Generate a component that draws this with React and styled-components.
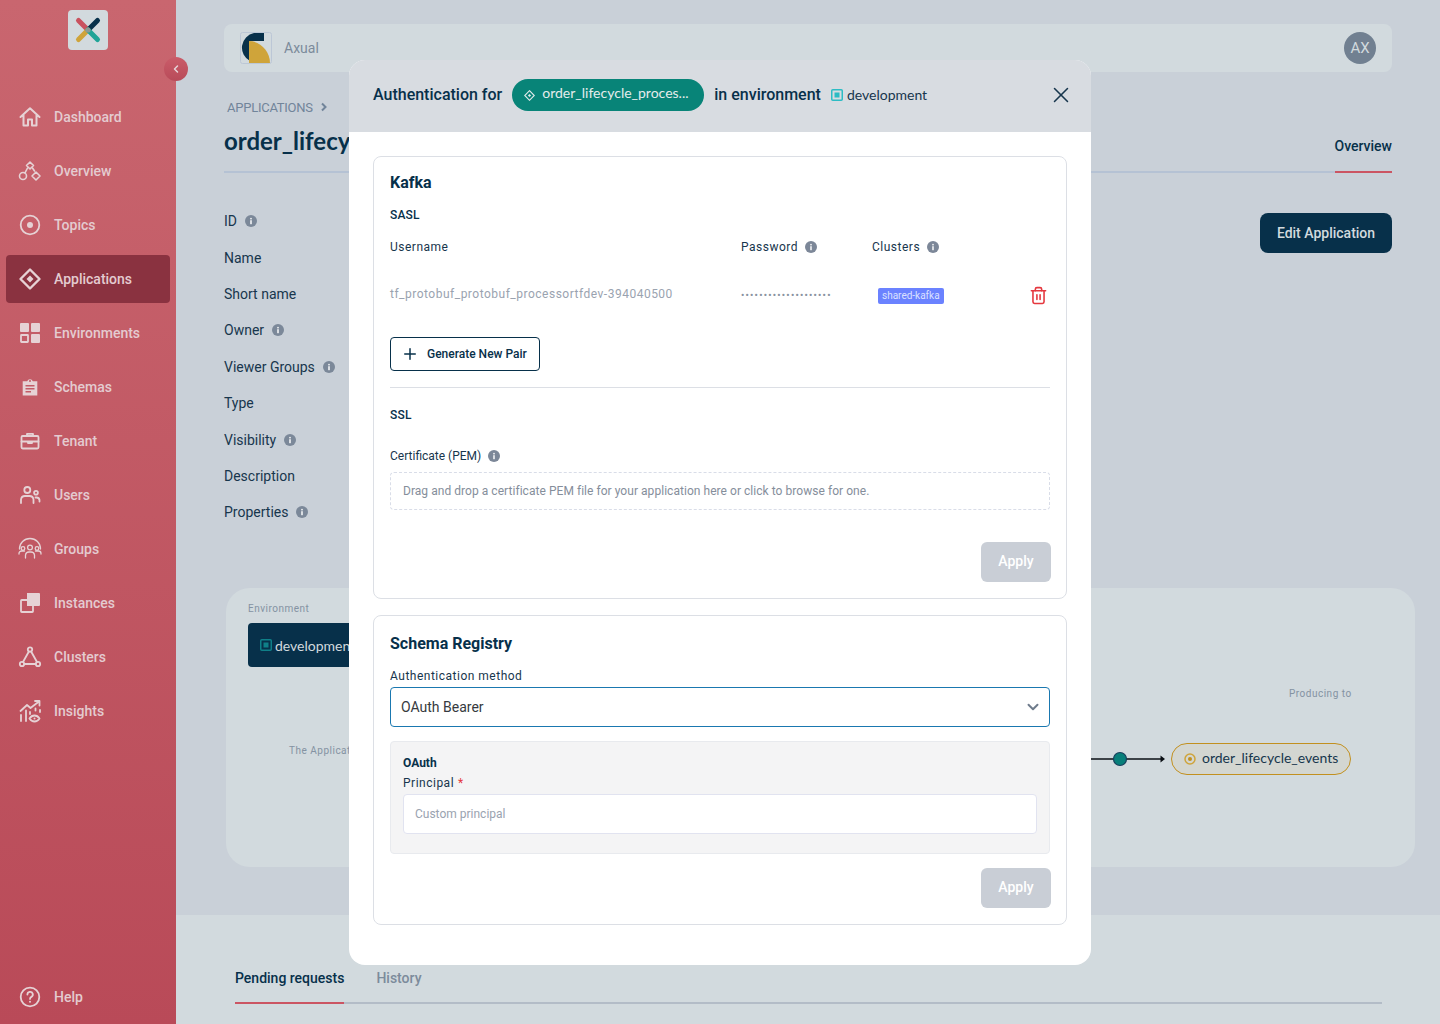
import React from 'react';
import styled, { createGlobalStyle } from 'styled-components';
import { ChevronDown, ChevronLeft, Plus, X, Trash2 } from 'lucide-react';

const GlobalStyle = createGlobalStyle`
  html, body {
    margin: 0;
    padding: 0;
    height: 100%;
    overflow: hidden;
    font-family: Roboto, "Liberation Sans", Arial, sans-serif;
  }
  * { box-sizing: border-box; }
`;

const Page = styled.div`
  display: flex;
  width: 1440px;
  height: 1024px;
  overflow: hidden;
  background-color: #c9d0d8;
`;

const Sidebar = styled.aside`
  position: relative;
  flex: 0 0 176px;
  display: flex;
  flex-direction: column;
  padding: 10px 6px 3px;
  background: linear-gradient(180deg, #c9666f 0%, #b94a58 100%);
`;

const LogoBox = styled.div`
  width: 40px;
  height: 40px;
  margin: 0 0 43px 62px;
  display: flex;
  align-items: center;
  justify-content: center;
  border-radius: 4px;
  background-color: #d2dade;
`;

const CollapseButton = styled.button`
  position: absolute;
  top: 57px;
  left: 164px;
  width: 24px;
  height: 24px;
  padding: 0;
  border: none;
  border-radius: 50%;
  display: flex;
  align-items: center;
  justify-content: center;
  color: #e6d5d8;
  background: linear-gradient(180deg, #ca5c69 0%, #b84b59 100%);
`;

const NavList = styled.nav`
  display: flex;
  flex-direction: column;
  gap: 6px;
`;

const NavItem = styled.a`
  height: 48px;
  display: flex;
  align-items: center;
  gap: 12px;
  padding-left: 12px;
  border-radius: 4px;
  color: #e4cbd0;
  font-size: 14px;
  font-weight: 500;
  background-color: ${(p) => (p.$active ? '#8a3240' : 'transparent')};
`;

const HelpItem = styled(NavItem)`
  margin-top: auto;
`;

const NavIcon = styled.svg`
  flex: 0 0 24px;
  width: 24px;
  height: 24px;
  fill: none;
  stroke: #e6d2d5;
  stroke-width: ${(p) => p.$stroke || 1.8};
  stroke-linecap: round;
  stroke-linejoin: round;
`;

const Main = styled.main`
  flex: 1;
  min-width: 0;
  display: flex;
  flex-direction: column;
`;

const Upper = styled.section`
  height: 915px;
  padding: 24px 48px 0;
`;

const TopBar = styled.header`
  height: 48px;
  display: flex;
  align-items: center;
  justify-content: space-between;
  padding: 0 16px;
  border-radius: 8px;
  background-color: #d2dade;
`;

const Org = styled.div`
  display: flex;
  align-items: center;
  gap: 12px;
  color: #7c8b9b;
  font-size: 14px;
`;

const Avatar = styled.div`
  width: 32px;
  height: 32px;
  border-radius: 50%;
  display: flex;
  align-items: center;
  justify-content: center;
  color: #d2dade;
  font-size: 15px;
  font-weight: 400;
  background-color: #718091;
`;

const Breadcrumb = styled.div`
  display: flex;
  align-items: center;
  gap: 5px;
  height: 16px;
  margin: 27px 0 0 3px;
  color: #71849a;
  font-size: 13px;
  letter-spacing: -0.25px;
`;

const TitleRow = styled.div`
  display: flex;
  justify-content: space-between;
  align-items: flex-end;
  height: 58px;
  border-bottom: 2px solid #b5c2d4;
`;

const Title = styled.h1`
  margin: 0 0 14px;
  color: #07304a;
  font-family: Lato, Roboto, sans-serif;
  font-size: 24px;
  line-height: 32px;
  font-weight: 700;
  white-space: nowrap;
`;

const ActiveTab = styled.div`
  margin-bottom: -2px;
  padding-bottom: 17px;
  border-bottom: 2px solid #cb5563;
  color: #07304a;
  font-size: 14px;
  line-height: 16px;
  font-weight: 500;
`;

const DetailsWrap = styled.div`
  display: flex;
  justify-content: space-between;
  align-items: flex-start;
  margin-top: 30px;
`;

const DetailsList = styled.div`
  display: flex;
  flex-direction: column;
`;

const DetailRow = styled.div`
  height: 36.4px;
  display: flex;
  align-items: center;
  gap: 8px;
  color: #17364d;
  font-size: 14px;
`;

const EditButton = styled.button`
  width: 132px;
  height: 40px;
  margin-top: 10px;
  border: none;
  border-radius: 8px;
  color: #d2dade;
  font-family: inherit;
  font-size: 14px;
  font-weight: 500;
  background-color: #07304a;
`;

const Diagram = styled.section`
  position: relative;
  height: 279px;
  margin: 57px -23px 0 2px;
  border-radius: 24px;
  background-color: #d2dade;
`;

const DiagramLabel = styled.span`
  position: absolute;
  top: ${(p) => p.$top}px;
  left: ${(p) => p.$left}px;
  color: #8492a2;
  font-size: 10px;
  line-height: 12px;
  letter-spacing: 0.5px;
  white-space: nowrap;
`;

const EnvNode = styled.div`
  position: absolute;
  top: 35px;
  left: 22px;
  width: 200px;
  height: 44px;
  display: flex;
  align-items: center;
  gap: 3px;
  padding: 1px 0 0 12px;
  border-radius: 4px;
  color: #d2dade;
  font-family: Lato, Roboto, sans-serif;
  font-size: 14px;
  background-color: #07304a;
`;

const Connector = styled.svg`
  position: absolute;
  top: 161px;
  left: 860px;
  width: 82px;
  height: 20px;
`;

const TopicNode = styled.div`
  position: absolute;
  top: 155px;
  left: 945px;
  width: 180px;
  height: 32px;
  display: flex;
  align-items: center;
  gap: 6px;
  padding-left: 12px;
  border: 1px solid #c2901f;
  border-radius: 16px;
  color: #17364d;
  font-family: Lato, Roboto, sans-serif;
  font-size: 14px;
  background-color: #d3d6d1;
`;

const TopicText = styled.span`
  margin-top: -3px;
`;

const LowerBand = styled.section`
  flex: 1;
  padding: 53px 58px 0 59px;
  background-color: #d2dade;
`;

const LowerTabs = styled.div`
  display: flex;
  gap: 32px;
  border-bottom: 2px solid #b3bcc7;
`;

const LowerTab = styled.div`
  margin-bottom: -2px;
  padding-bottom: 15px;
  height: 36px;
  font-size: 14px;
  line-height: 20px;
  font-weight: 500;
  color: ${(p) => (p.$active ? '#07304a' : '#7c8b9b')};
  border-bottom: 2px solid ${(p) => (p.$active ? '#cb5563' : 'transparent')};
`;

const Modal = styled.div`
  position: fixed;
  top: 60px;
  left: 349px;
  width: 742px;
  height: 905px;
  border-radius: 16px;
  overflow: hidden;
  background-color: #ffffff;
`;

const ModalHeader = styled.div`
  height: 72px;
  display: flex;
  align-items: center;
  padding: 0 16px 2px 24px;
  color: #07304a;
  font-size: 16px;
  font-weight: 500;
  background-color: #d8dce1;
`;

const HeaderText = styled.span`
  margin-top: -1px;
`;

const AppPill = styled.div`
  width: 192px;
  height: 32px;
  display: flex;
  align-items: center;
  gap: 7px;
  margin: 0 10px;
  padding: 0 0 0 12px;
  border-radius: 16px;
  color: #e4ecec;
  font-family: Lato, Roboto, sans-serif;
  font-size: 14px;
  font-weight: 400;
  background-color: #088478;
`;

const PillText = styled.span`
  margin-top: -5px;
`;

const EnvTag = styled.div`
  display: flex;
  align-items: center;
  gap: 4px;
  margin-left: 10px;
  color: #17364d;
  font-family: Lato, Roboto, sans-serif;
  font-size: 14px;
  font-weight: 400;
`;

const CloseButton = styled.button`
  margin-left: auto;
  flex: 0 0 28px;
  width: 28px;
  height: 28px;
  padding: 0;
  border: none;
  display: flex;
  align-items: center;
  justify-content: center;
  color: #17364d;
  background: none;
`;

const ModalBody = styled.div`
  display: flex;
  flex-direction: column;
  gap: 16px;
  padding: 24px;
`;

const Card = styled.div`
  display: flex;
  flex-direction: column;
  padding: ${(p) => p.$top}px 16px 16px;
  border: 1px solid #dcdfe5;
  border-radius: 8px;
`;

const CardTitle = styled.h2`
  margin: 0;
  color: #07304a;
  font-size: 16px;
  line-height: 20px;
  font-weight: 700;
`;

const SubTitle = styled.h3`
  height: 16px;
  margin: ${(p) => p.$mt}px 0 0;
  color: #07304a;
  font-size: 12px;
  line-height: 16px;
  font-weight: 500;
  letter-spacing: 0.2px;
`;

const CredGrid = styled.div`
  display: grid;
  grid-template-columns: 351px 131px 1fr 21px;
  align-items: center;
`;

const HeadCell = styled.div`
  display: flex;
  align-items: center;
  gap: 7px;
  height: 16px;
  margin-top: 16px;
  color: #17364d;
  font-size: 12px;
  letter-spacing: 0.5px;
`;

const ValueCell = styled.div`
  height: 48px;
  margin-top: 16px;
  display: flex;
  align-items: center;
  padding-bottom: 2px;
  color: #9aa3b0;
  font-size: 12px;
  letter-spacing: 0.5px;
`;

const Dots = styled(ValueCell)`
  padding-bottom: 0;
  color: #8a93a1;
  font-size: 9px;
  letter-spacing: 1.3px;
  font-weight: 700;
`;

const ClusterCell = styled(ValueCell)`
  padding: 1px 0 0;
`;

const ClusterChip = styled.span`
  height: 16px;
  margin-left: 6px;
  padding: 0 4px;
  border-radius: 2px;
  color: #dbe1ff;
  font-size: 10px;
  line-height: 16px;
  letter-spacing: 0;
  background-color: #6b82ff;
`;

const TrashCell = styled(ValueCell)`
  padding: 1px 0 0;
  color: #e5383f;

  svg {
    flex: none;
  }
`;

const OutlineButton = styled.button`
  width: 150px;
  height: 34px;
  margin-top: 18px;
  display: flex;
  align-items: center;
  gap: 8px;
  padding: 0 0 0 10px;
  border: 1px solid #07304a;
  border-radius: 4px;
  color: #07304a;
  font-family: inherit;
  font-size: 12px;
  font-weight: 500;
  background-color: #ffffff;
`;

const Divider = styled.hr`
  width: 100%;
  height: 1px;
  margin: 16px 0 0;
  border: none;
  background-color: #dcdfe5;
`;

const FieldLabel = styled.div`
  display: flex;
  align-items: center;
  gap: 7px;
  height: 16px;
  margin-top: ${(p) => p.$mt}px;
  color: #17364d;
  font-size: 12px;
  letter-spacing: ${(p) => p.$ls || 0}px;
`;

const DropZone = styled.div`
  height: 38px;
  margin-top: 8px;
  display: flex;
  align-items: center;
  padding-left: 12px;
  border: 1px dashed #d9dde8;
  border-radius: 4px;
  color: #858e9b;
  font-size: 12px;
  letter-spacing: 0.045px;
`;

const ApplyButton = styled.button`
  align-self: flex-end;
  width: 70px;
  height: 40px;
  margin: ${(p) => p.$mt}px -1px 0 0;
  padding: 0 0 2px;
  border: none;
  border-radius: 6px;
  color: #ffffff;
  font-family: inherit;
  font-size: 14px;
  font-weight: 500;
  background-color: #c9ced6;
`;

const SelectBox = styled.div`
  height: 40px;
  margin-top: 3px;
  display: flex;
  align-items: center;
  justify-content: space-between;
  padding: 0 7px 0 10px;
  border: 1px solid #1a78b0;
  border-radius: 4px;
  color: #363a40;
  font-size: 14px;
`;

const OAuthBox = styled.div`
  display: flex;
  flex-direction: column;
  margin-top: 14px;
  padding: 13px 12px 19px;
  border: 1px solid #e8eaee;
  border-radius: 4px;
  background-color: #f4f4f5;
`;

const OAuthTitle = styled.div`
  height: 16px;
  color: #07304a;
  font-size: 12px;
  line-height: 16px;
  font-weight: 700;
`;

const Required = styled.span`
  margin-left: -3px;
  color: #e5383f;
`;

const TextInput = styled.input`
  height: 40px;
  margin-top: 3px;
  padding: 0 11px;
  border: 1px solid #e1e3f0;
  border-radius: 4px;
  font-family: inherit;
  font-size: 12px;
  background-color: #ffffff;

  &::placeholder {
    color: #9aa3b0;
    opacity: 1;
  }
`;

const InfoMark = ({ color = '#7c8798' }) => (
  <svg width="12" height="12" viewBox="0 0 12 12">
    <circle cx="6" cy="6" r="6" fill={color} />
    <rect x="5.1" y="5.2" width="1.8" height="4" fill="#ffffff" opacity="0.8" />
    <rect x="5.1" y="2.9" width="1.8" height="1.5" fill="#ffffff" opacity="0.8" />
  </svg>
);

const EnvSquare = ({ color }) => (
  <svg width="12" height="12" viewBox="0 0 12 12">
    <rect x="0.75" y="0.75" width="10.5" height="10.5" rx="1" fill="none" stroke={color} strokeWidth="1.5" />
    <rect x="3.5" y="3.5" width="5" height="5" fill={color} />
  </svg>
);

const AxualX = () => (
  <svg width="28" height="28" viewBox="0 0 28 28" strokeWidth="5" strokeLinecap="round">
    <path d="M4.5 4.5 14 14" stroke="#c9525f" />
    <path d="M23.5 4.5 14 14" stroke="#07304a" />
    <path d="M4.5 23.5 14 14" stroke="#cfa43a" />
    <path d="M23.5 23.5 14 14" stroke="#1fa497" />
    <circle cx="14" cy="14" r="2.6" fill="#8c9a94" />
  </svg>
);

const OrgLogo = () => (
  <svg width="32" height="32" viewBox="0 0 32 32">
    <rect x="0.5" y="0.5" width="31" height="31" rx="2" fill="none" stroke="#bcc7d6" />
    <path d="M24 1 H14 A15 15 0 0 0 10 29 V9 H24 Z" fill="#07304a" />
    <path d="M9 31 V9 C20 9 30 19 30 31 Z" fill="#cfa43a" />
  </svg>
);

const IconHome = () => (
  <NavIcon viewBox="0 0 24 24" $stroke={2}>
    <path d="M2.5 12 12 3.2 21.5 12M5.5 10v10.5H10v-6h4v6h4.5V10" />
  </NavIcon>
);
const IconOverview = () => (
  <NavIcon viewBox="0 0 24 24" $stroke={1.6}>
    <path d="M12 3 15.5 6.5 12 10 8.5 6.5Z" />
    <circle cx="5" cy="17" r="3.5" />
    <path d="M18 13 22 17l-4 4-4-4Z" />
    <path d="M9.5 9 7 13.8M14.5 9l2 3" />
  </NavIcon>
);
const IconTopics = () => (
  <NavIcon viewBox="0 0 24 24">
    <circle cx="12" cy="12" r="9.3" />
    <circle cx="12" cy="12" r="3" fill="#e6d2d5" stroke="none" />
  </NavIcon>
);
const IconApps = () => (
  <NavIcon viewBox="0 0 24 24" $stroke={2.4}>
    <path d="M12 2.5 21.5 12 12 21.5 2.5 12Z" />
    <path d="M12 8.5 15.5 12 12 15.5 8.5 12Z" fill="#e6d2d5" stroke="none" />
  </NavIcon>
);
const IconEnvs = () => (
  <NavIcon viewBox="0 0 24 24">
    <rect x="2" y="2" width="9" height="9" rx="1" fill="#e6d2d5" stroke="none" />
    <rect x="13" y="2" width="9" height="9" rx="1" fill="#e6d2d5" stroke="none" />
    <rect x="3" y="14" width="7" height="7" rx="0.5" />
    <rect x="13" y="13" width="9" height="9" rx="1" fill="#e6d2d5" stroke="none" />
  </NavIcon>
);
const IconSchemas = () => (
  <NavIcon viewBox="0 0 24 24" $stroke={0.01}>
    <path
      fill="#e6d2d5"
      fillRule="evenodd"
      d="M19.3 6.2h-4.5a3 3 0 0 0-5.6 0H4.7V20.5H19.3ZM12 5a1 1 0 1 1 0 2 1 1 0 0 1 0-2ZM7.5 10h9v1.5h-9Zm0 3h9v1.5h-9Zm0 3h5.5v1.500H7.5Z"
    />
  </NavIcon>
);
const IconTenant = () => (
  <NavIcon viewBox="0 0 24 24">
    <rect x="3.5" y="7" width="17" height="12.5" rx="1.2" />
    <path d="M9 7V4.8h6V7M3.5 12.5h17M10 12.5v1.5h4v-1.5" />
  </NavIcon>
);
const IconUsers = () => (
  <NavIcon viewBox="0 0 24 24">
    <circle cx="9.3" cy="7" r="3" />
    <path d="M3 20v-3.5a4 4 0 0 1 4-3.5h4.5a4 4 0 0 1 4 3.5V20" />
    <circle cx="18" cy="9.8" r="1.9" />
    <path d="M17.5 14.5h1a3 3 0 0 1 3 2.5v1.5" />
  </NavIcon>
);
const IconGroups = () => (
  <NavIcon viewBox="0 0 24 24" $stroke={1.3}>
    <path d="M1.5 12a10.5 10.5 0 0 1 21 0" />
    <circle cx="12" cy="10.5" r="2.4" />
    <path d="M7.5 21v-3a3.5 3.5 0 0 1 3.5-3h2a3.5 3.5 0 0 1 3.5 3v3" />
    <circle cx="5" cy="11.5" r="1.8" />
    <circle cx="19" cy="11.5" r="1.8" />
    <path d="M1 17v-.5a2.5 2.5 0 0 1 2.5-2.5h3M23 17v-.5a2.5 2.5 0 0 0-2.5-2.5h-3" />
  </NavIcon>
);
const IconInstances = () => (
  <NavIcon viewBox="0 0 24 24">
    <path d="M9 2h12a1 1 0 0 1 1 1v11a1 1 0 0 1-1 1h-6V9H9Z" fill="#e6d2d5" stroke="none" />
    <rect x="3" y="9" width="12" height="12" rx="0.8" />
    <rect x="9" y="9" width="6" height="6" fill="#e6d2d5" stroke="none" />
  </NavIcon>
);
const IconClusters = () => (
  <NavIcon viewBox="0 0 24 24">
    <circle cx="12" cy="4.5" r="2.2" />
    <circle cx="4" cy="19" r="2.2" />
    <circle cx="20" cy="19" r="2.2" />
    <path d="M10.9 6.5 5 17M13.1 6.5 19 17M6.2 19h11.6" />
  </NavIcon>
);
const IconInsights = () => (
  <NavIcon viewBox="0 0 24 24">
    <path d="M2.5 12 9 6l3.5 3L21 2.5M17 2h4.5v4.5" />
    <path d="M3 22v-6M8 22V11.5M12 13v2M17.5 9.5v2M22 11v2" />
    <path d="M11.5 19.5c1.5-2.4 3-3 5-3s3.5.6 5 3c-1.5 2.4-3 3-5 3s-3.5-.6-5-3Z" />
    <circle cx="16.5" cy="19.5" r="1" fill="#e6d2d5" stroke="none" />
  </NavIcon>
);
const IconHelp = () => (
  <NavIcon viewBox="0 0 24 24">
    <circle cx="12" cy="12" r="9.3" />
    <path d="M9.4 9.5a2.7 2.7 0 1 1 4 2.4c-.9.5-1.4 1-1.4 2" />
    <circle cx="12" cy="16.8" r="1" fill="#e6d2d5" stroke="none" />
  </NavIcon>
);

const navItems = [
  { label: 'Dashboard', icon: IconHome },
  { label: 'Overview', icon: IconOverview },
  { label: 'Topics', icon: IconTopics },
  { label: 'Applications', icon: IconApps, active: true },
  { label: 'Environments', icon: IconEnvs },
  { label: 'Schemas', icon: IconSchemas },
  { label: 'Tenant', icon: IconTenant },
  { label: 'Users', icon: IconUsers },
  { label: 'Groups', icon: IconGroups },
  { label: 'Instances', icon: IconInstances },
  { label: 'Clusters', icon: IconClusters },
  { label: 'Insights', icon: IconInsights },
];

const detailRows = [
  { label: 'ID', info: true },
  { label: 'Name' },
  { label: 'Short name' },
  { label: 'Owner', info: true },
  { label: 'Viewer Groups', info: true },
  { label: 'Type' },
  { label: 'Visibility', info: true },
  { label: 'Description' },
  { label: 'Properties', info: true },
];

function App() {
  return (
    <Page>
      <GlobalStyle />
      <Sidebar>
        <LogoBox>
          <AxualX />
        </LogoBox>
        <CollapseButton aria-label="Collapse">
          <ChevronLeft size={12} strokeWidth={3} />
        </CollapseButton>
        <NavList>
          {navItems.map((item) => (
            <NavItem key={item.label} $active={item.active}>
              <item.icon />
              {item.label}
            </NavItem>
          ))}
        </NavList>
        <HelpItem>
          <IconHelp />
          Help
        </HelpItem>
      </Sidebar>

      <Main>
        <Upper>
          <TopBar>
            <Org>
              <OrgLogo />
              Axual
            </Org>
            <Avatar>AX</Avatar>
          </TopBar>
          <Breadcrumb>
            APPLICATIONS
            <svg width="12" height="12" viewBox="0 0 12 12" fill="none" stroke="#71849a" strokeWidth="2">
              <path d="M4 2.5 7.5 6 4 9.5" />
            </svg>
          </Breadcrumb>
          <TitleRow>
            <Title>order_lifecycle_processor</Title>
            <ActiveTab>Overview</ActiveTab>
          </TitleRow>
          <DetailsWrap>
            <DetailsList>
              {detailRows.map((row) => (
                <DetailRow key={row.label}>
                  {row.label}
                  {row.info && <InfoMark color="#7b8899" />}
                </DetailRow>
              ))}
            </DetailsList>
            <EditButton>Edit Application</EditButton>
          </DetailsWrap>
          <Diagram>
            <DiagramLabel $top={15} $left={22}>Environment</DiagramLabel>
            <EnvNode>
              <EnvSquare color="#0f7f88" />
              development
            </EnvNode>
            <DiagramLabel $top={157} $left={63}>The Application</DiagramLabel>
            <DiagramLabel $top={100} $left={1063}>Producing to</DiagramLabel>
            <Connector viewBox="0 0 82 20">
              <path d="M0 10h76" stroke="#0a0f14" strokeWidth="1.6" />
              <path d="M74.5 6.5 79 10l-4.5 3.5Z" fill="#0a0f14" />
              <circle cx="34" cy="10" r="6.5" fill="#087f7a" stroke="#17405c" strokeWidth="1.2" />
            </Connector>
            <TopicNode>
              <svg width="12" height="12" viewBox="0 0 12 12">
                <circle cx="6" cy="6" r="5" fill="none" stroke="#cfa43a" strokeWidth="1.5" />
                <circle cx="6" cy="6" r="2" fill="#c2901f" />
              </svg>
              <TopicText>order_lifecycle_events</TopicText>
            </TopicNode>
          </Diagram>
        </Upper>
        <LowerBand>
          <LowerTabs>
            <LowerTab $active>Pending requests</LowerTab>
            <LowerTab>History</LowerTab>
          </LowerTabs>
        </LowerBand>
      </Main>

      <Modal>
        <ModalHeader>
          <HeaderText>Authentication for</HeaderText>
          <AppPill>
            <svg width="11" height="11" viewBox="0 0 12 12" fill="none" stroke="#e4ecec" strokeWidth="1.2">
              <path d="M6 .8 11.2 6 6 11.2.8 6Z" />
              <path d="M6 4.3 7.7 6 6 7.7 4.3 6Z" fill="#e4ecec" stroke="none" />
            </svg>
            <PillText>order_lifecycle_proces...</PillText>
          </AppPill>
          <HeaderText>in environment</HeaderText>
          <EnvTag>
            <EnvSquare color="#2cbcc4" />
            <HeaderText>development</HeaderText>
          </EnvTag>
          <CloseButton aria-label="Close">
            <X size={26} strokeWidth={1.4} />
          </CloseButton>
        </ModalHeader>

        <ModalBody>
          <Card $top={16}>
            <CardTitle>Kafka</CardTitle>
            <SubTitle $mt={14}>SASL</SubTitle>
            <CredGrid>
              <HeadCell>Username</HeadCell>
              <HeadCell>Password <InfoMark /></HeadCell>
              <HeadCell>Clusters <InfoMark /></HeadCell>
              <HeadCell />
              <ValueCell>tf_protobuf_protobuf_processortfdev-394040500</ValueCell>
              <Dots>••••••••••••••••••••</Dots>
              <ClusterCell><ClusterChip>shared-kafka</ClusterChip></ClusterCell>
              <TrashCell><Trash2 size={19} strokeWidth={2} /></TrashCell>
            </CredGrid>
            <OutlineButton>
              <Plus size={18} strokeWidth={2} />
              Generate New Pair
            </OutlineButton>
            <Divider />
            <SubTitle $mt={19}>SSL</SubTitle>
            <FieldLabel $mt={25}>Certificate (PEM) <InfoMark /></FieldLabel>
            <DropZone>Drag and drop a certificate PEM file for your application here or click to browse for one.</DropZone>
            <ApplyButton $mt={32}>Apply</ApplyButton>
          </Card>

          <Card $top={18}>
            <CardTitle>Schema Registry</CardTitle>
            <FieldLabel $mt={14} $ls={0.5}>Authentication method</FieldLabel>
            <SelectBox>
              OAuth Bearer
              <ChevronDown size={18} strokeWidth={2.6} color="#6f7c8c" />
            </SelectBox>
            <OAuthBox>
              <OAuthTitle>OAuth</OAuthTitle>
              <FieldLabel $mt={4} $ls={0.5}>Principal <Required>*</Required></FieldLabel>
              <TextInput placeholder="Custom principal" />
            </OAuthBox>
            <ApplyButton $mt={14}>Apply</ApplyButton>
          </Card>
        </ModalBody>
      </Modal>
    </Page>
  );
}

export default App;
